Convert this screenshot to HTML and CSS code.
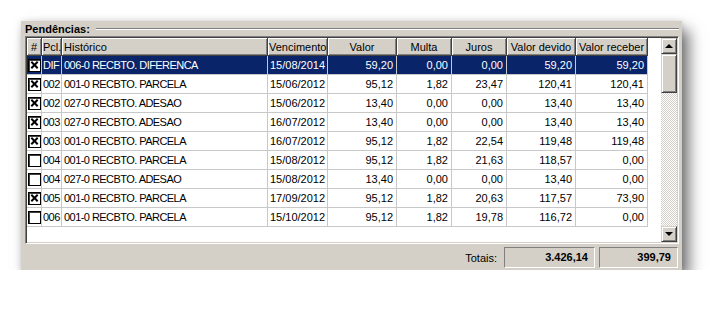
FILE: index.html
```html
<!DOCTYPE html>
<html lang="pt-BR">
  <head>
    <meta charset="UTF-8" />
    <title>Pendências</title>
    <link rel="stylesheet" href="styles.css">
  </head>
  <body>
    <div class="panel">
      <div class="legend">
        <span class="legend-title">Pendências:</span>
        <span class="legend-line"></span>
      </div>

      <div class="grid">
        <div class="grid-body">
          <table class="pend">
            <thead>
              <tr>
                <th class="c-chk center">#</th>
                <th class="c-pcl">Pcl.</th>
                <th class="c-hist">Histórico</th>
                <th class="c-venc">Vencimento</th>
                <th class="c-valor center">Valor</th>
                <th class="c-multa center">Multa</th>
                <th class="c-juros center">Juros</th>
                <th class="c-devido center">Valor devido</th>
                <th class="c-receber center">Valor receber</th>
              </tr>
            </thead>
            <tbody>
              <tr class="selected">
                <td class="chk"><span class="box on"></span></td>
                <td class="pcl">DIF</td>
                <td class="hist">006-0 RECBTO. DIFERENCA</td>
                <td>15/08/2014</td>
                <td class="num">59,20</td>
                <td class="num">0,00</td>
                <td class="num">0,00</td>
                <td class="num">59,20</td>
                <td class="num">59,20</td>
              </tr>
              <tr>
                <td class="chk"><span class="box on"></span></td>
                <td class="pcl">002</td>
                <td class="hist">001-0 RECBTO. PARCELA</td>
                <td>15/06/2012</td>
                <td class="num">95,12</td>
                <td class="num">1,82</td>
                <td class="num">23,47</td>
                <td class="num">120,41</td>
                <td class="num">120,41</td>
              </tr>
              <tr>
                <td class="chk"><span class="box on"></span></td>
                <td class="pcl">002</td>
                <td class="hist">027-0 RECBTO. ADESAO</td>
                <td>15/06/2012</td>
                <td class="num">13,40</td>
                <td class="num">0,00</td>
                <td class="num">0,00</td>
                <td class="num">13,40</td>
                <td class="num">13,40</td>
              </tr>
              <tr>
                <td class="chk"><span class="box on"></span></td>
                <td class="pcl">003</td>
                <td class="hist">027-0 RECBTO. ADESAO</td>
                <td>16/07/2012</td>
                <td class="num">13,40</td>
                <td class="num">0,00</td>
                <td class="num">0,00</td>
                <td class="num">13,40</td>
                <td class="num">13,40</td>
              </tr>
              <tr>
                <td class="chk"><span class="box on"></span></td>
                <td class="pcl">003</td>
                <td class="hist">001-0 RECBTO. PARCELA</td>
                <td>16/07/2012</td>
                <td class="num">95,12</td>
                <td class="num">1,82</td>
                <td class="num">22,54</td>
                <td class="num">119,48</td>
                <td class="num">119,48</td>
              </tr>
              <tr>
                <td class="chk"><span class="box"></span></td>
                <td class="pcl">004</td>
                <td class="hist">001-0 RECBTO. PARCELA</td>
                <td>15/08/2012</td>
                <td class="num">95,12</td>
                <td class="num">1,82</td>
                <td class="num">21,63</td>
                <td class="num">118,57</td>
                <td class="num">0,00</td>
              </tr>
              <tr>
                <td class="chk"><span class="box"></span></td>
                <td class="pcl">004</td>
                <td class="hist">027-0 RECBTO. ADESAO</td>
                <td>15/08/2012</td>
                <td class="num">13,40</td>
                <td class="num">0,00</td>
                <td class="num">0,00</td>
                <td class="num">13,40</td>
                <td class="num">0,00</td>
              </tr>
              <tr>
                <td class="chk"><span class="box on"></span></td>
                <td class="pcl">005</td>
                <td class="hist">001-0 RECBTO. PARCELA</td>
                <td>17/09/2012</td>
                <td class="num">95,12</td>
                <td class="num">1,82</td>
                <td class="num">20,63</td>
                <td class="num">117,57</td>
                <td class="num">73,90</td>
              </tr>
              <tr>
                <td class="chk"><span class="box"></span></td>
                <td class="pcl">006</td>
                <td class="hist">001-0 RECBTO. PARCELA</td>
                <td>15/10/2012</td>
                <td class="num">95,12</td>
                <td class="num">1,82</td>
                <td class="num">19,78</td>
                <td class="num">116,72</td>
                <td class="num">0,00</td>
              </tr>
            </tbody>
          </table>
        </div>

        <div class="scrollbar">
          <div class="sb-btn"><span class="arrow up"></span></div>
          <div class="sb-thumb"></div>
          <div class="sb-track"></div>
          <div class="sb-btn"><span class="arrow down"></span></div>
        </div>
      </div>

      <div class="totals">
        <span class="totals-label">Totais:</span>
        <div class="total-box w-devido">3.426,14</div>
        <div class="total-box w-receber">399,79</div>
      </div>
    </div>
  </body>
</html>
```

FILE: styles.css
```css
body {
  margin: 0;
  background: #fff;
  font-family: "Liberation Sans", Arial, sans-serif;
  font-size: 11px;
  color: #000;
}

.panel {
  margin: 21px 0 0 21px;
  width: 661px;
  height: 249px;
  background: #d4d0c8;
  box-shadow: 7px 9px 14px rgba(0, 0, 0, 0.55), 0 0 6px rgba(0, 0, 0, 0.12);
}

/* group box title */
.legend {
  display: flex;
  align-items: center;
  height: 15px;
  padding-left: 4px;
}

.legend-title {
  font-weight: bold;
}

.legend-line {
  flex: 1;
  margin: 0 3px 0 6px;
  border-top: 1px solid #808080;
  border-bottom: 1px solid #fff;
}

/* the grid */
.grid {
  display: flex;
  box-sizing: border-box;
  margin-left: 4px;
  width: 654px;
  height: 208px;
  border: 1px solid;
  border-color: #808080 #fff #fff #808080;
  box-shadow: inset 1px 1px #404040, inset -1px -1px #d4d0c8;
  padding: 1px;
}

.grid-body {
  flex: 1;
  background: #fff;
  overflow: hidden;
}

.pend {
  table-layout: fixed;
  width: 621px;
  border-collapse: separate;
  border-spacing: 0;
}

.pend th,
.pend td {
  box-sizing: border-box;
  padding: 0 2px;
  white-space: nowrap;
  overflow: hidden;
  font-weight: normal;
  text-align: left;
}

.pend th {
  height: 18px;
  background: #d4d0c8;
  border-right: 1px solid #404040;
  border-bottom: 1px solid #404040;
  box-shadow: inset 1px 1px #fff, inset -1px -1px #808080;
}

.pend td {
  height: 19px;
  border-right: 1px solid #c8c8c8;
  border-bottom: 1px solid #c8c8c8;
}

.pend .center {
  text-align: center;
}

.pend .num {
  text-align: right;
  padding-right: 3px;
}

.pend td.pcl {
  padding: 0 0 0 1px;
  letter-spacing: -0.5px;
}

.pend .hist {
  letter-spacing: -0.55px;
}

.c-chk { width: 15px; }
.c-pcl { width: 20px; }
.c-hist { width: 206px; }
.c-venc { width: 60px; }
.c-valor { width: 69px; }
.c-multa { width: 55px; }
.c-juros { width: 55px; }
.c-devido { width: 69px; }
.c-receber { width: 72px; }

.pend th.c-pcl,
.pend th.c-venc,
.pend th.c-chk {
  padding: 0 1px;
}

.pend td.chk {
  padding: 0;
  text-align: center;
  vertical-align: middle;
}

.selected td {
  background: #0a246a;
  color: #fff;
}

/* checkbox */
.box {
  display: block;
  box-sizing: border-box;
  margin: 0 auto 0 1px;
  width: 13px;
  height: 13px;
  background: #fff;
  border: 1px solid #000;
  box-shadow: inset 1px 1px #404040;
  position: relative;
}

.box.on::before,
.box.on::after {
  content: "";
  position: absolute;
  left: 1px;
  top: 4px;
  width: 9px;
  height: 2px;
  background: #000;
  transform: rotate(45deg);
}

.box.on::after {
  transform: rotate(-45deg);
}

/* scrollbar */
.scrollbar {
  display: flex;
  flex-direction: column;
  width: 16px;
}

.sb-btn,
.sb-thumb {
  box-sizing: border-box;
  background: #d4d0c8;
  border: 1px solid;
  border-color: #d4d0c8 #404040 #404040 #d4d0c8;
  box-shadow: inset 1px 1px #fff, inset -1px -1px #808080;
}

.sb-btn {
  height: 16px;
  display: flex;
  justify-content: center;
  align-items: center;
}

.sb-thumb {
  height: 39px;
}

.sb-track {
  flex: 1;
  background: repeating-conic-gradient(#fff 0 25%, #d4d0c8 0 50%) 0 0 / 2px 2px;
}

.arrow {
  width: 0;
  height: 0;
  border-left: 4px solid transparent;
  border-right: 4px solid transparent;
}

.arrow.up {
  border-bottom: 4px solid #000;
  margin-top: -1px;
}

.arrow.down {
  border-top: 4px solid #000;
}

/* totals */
.totals {
  display: flex;
  justify-content: flex-end;
  align-items: center;
  gap: 4px;
  margin-top: 3px;
  padding-right: 4px;
}

.totals-label {
  margin-right: 3px;
}

.total-box {
  box-sizing: border-box;
  height: 21px;
  line-height: 19px;
  padding-right: 6px;
  text-align: right;
  font-weight: bold;
  border: 1px solid;
  border-color: #808080 #fff #fff #808080;
}

.w-devido { width: 91px; }
.w-receber { width: 79px; }
```
